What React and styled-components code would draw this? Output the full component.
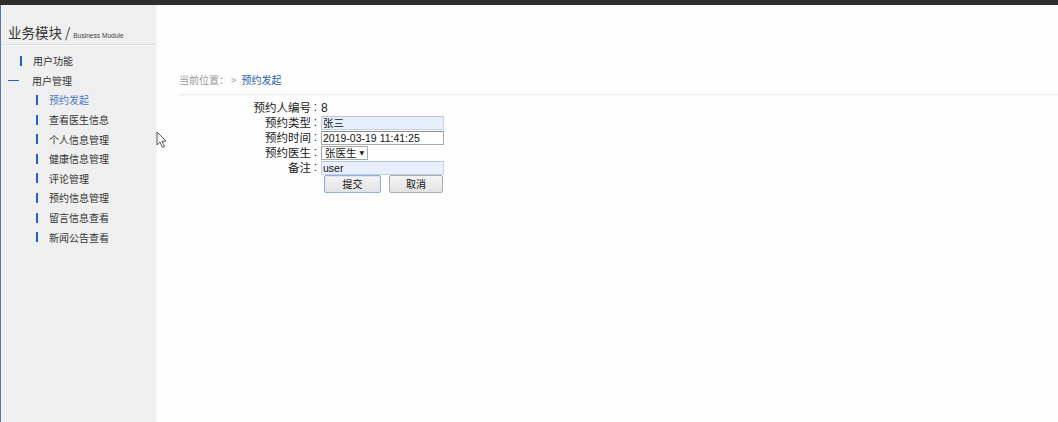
import React from "react";
import styled, { createGlobalStyle } from "styled-components";

const Global = createGlobalStyle`
  html, body { margin: 0; padding: 0; background: #fdfdfd; }
  body { font-family: "Liberation Sans", "Noto Sans CJK SC", sans-serif; color: #333; }
  * { box-sizing: border-box; }
`;

const Page = styled.div`
  position: relative;
  width: 1058px;
  height: 422px;
  display: flex;
  flex-direction: column;
  overflow: hidden;
`;

const TopBar = styled.div`
  height: 5px;
  background: #2e2e2c;
  flex: none;
`;

const Body = styled.div`
  flex: 1;
  display: flex;
`;

const Sidebar = styled.aside`
  width: 157px;
  flex: none;
  background: #efefef;
  border-left: 1px solid #5a76a0;
  border-right: 1px solid #f4f4f4;
`;

const SideTitle = styled.div`
  height: 40px;
  padding: 18px 0 0 7px;
  border-bottom: 1px solid #dcdcdc;
  box-shadow: 0 1px 0 #f7f7f7;
  font-family: "Noto Sans CJK SC", sans-serif;
  font-size: 13.5px;
  color: #333;
  white-space: nowrap;
  line-height: 18px;
`;

const SubTitle = styled.span`
  font-family: "Liberation Sans", sans-serif;
  font-size: 6.6px;
  color: #444;
`;

const Menu = styled.ul`
  list-style: none;
  margin: 0;
  padding: 6px 0 0 0;
`;

const Item = styled.li`
  height: 19.6px;
  display: flex;
  align-items: center;
  padding-left: ${(p) => (p.$level === 2 ? 35 : p.$dash ? 7 : 19)}px;
  font-family: "Noto Sans CJK SC", sans-serif;
  font-size: 10px;
  color: ${(p) => (p.$active ? "#4a78c8" : "#333")};
  white-space: nowrap;
`;

const Bar = styled.span`
  display: inline-block;
  width: 2px;
  height: 10px;
  background: #2160d0;
  margin-right: 11px;
`;

const Dash = styled.span`
  display: inline-block;
  width: 11px;
  height: 1px;
  background: #2160d0;
  margin-right: 13px;
`;

const Main = styled.main`
  flex: 1;
  background: #fdfdfd;
`;

const Crumb = styled.div`
  margin: 66px 0 0 22px;
  height: 24px;
  padding-top: 1px;
  border-bottom: 1px solid #eeeeee;
  box-shadow: 0 1px 0 #f6f6f6;
  font-family: "Noto Sans CJK SC", sans-serif;
  font-size: 10px;
  color: #9a9a9a;
  line-height: 16px;
`;

const CrumbSep = styled.span`
  margin: 0 5px 0 2px;
`;

const CrumbLink = styled.span`
  color: #2a5faa;
`;

const Form = styled.div`
  margin-top: 5px;
  display: grid;
  grid-template-columns: 163px 124px;
  grid-auto-rows: 15px;
  font-family: "Noto Sans CJK SC", sans-serif;
  font-size: 11.5px;
  color: #222;
`;

const Label = styled.div`
  display: flex;
  justify-content: flex-end;
  align-items: center;
  line-height: 15px;
  white-space: nowrap;
`;

const Colon = styled.span`
  display: inline-block;
  width: 9px;
  text-align: center;
  font-family: "Liberation Sans", sans-serif;
  font-size: 12px;
`;

const Value = styled.div`
  display: flex;
  align-items: center;
  font-family: "Liberation Sans", sans-serif;
  font-size: 12px;
  padding-left: 1px;
`;

const Input = styled.div`
  width: 123px;
  height: 14px;
  border: 1px solid ${(p) => (p.$filled ? "#c7cfe0" : "#a9a9a9")};
  border-top-color: ${(p) => (p.$filled ? "#b8c2d8" : "#8f8f8f")};
  background: ${(p) => (p.$filled ? "#e8effc" : "#ffffff")};
  font-family: "Liberation Sans", "Noto Sans CJK SC", sans-serif;
  font-size: 10.5px;
  line-height: 12px;
  padding-left: 1px;
  color: #111;
  white-space: nowrap;
  overflow: hidden;
`;

const Select = styled.div`
  width: 47px;
  height: 14px;
  border: 1px solid #a9a9a9;
  background: #fff;
  display: flex;
  align-items: center;
  justify-content: space-between;
  padding: 0 3px 0 3px;
  font-family: "Noto Sans CJK SC", sans-serif;
  font-size: 10.5px;
  color: #111;
  white-space: nowrap;
`;

const Arrow = styled.span`
  font-size: 6px;
  color: #111;
  font-family: "DejaVu Sans", sans-serif;
`;

const Buttons = styled.div`
  grid-column: 2;
  display: flex;
  gap: 8px;
  padding-left: 4px;
  height: 18px;
`;

const Button = styled.button`
  height: 18px;
  width: ${(p) => p.$w}px;
  padding: 0;
  border: 1px solid ${(p) => (p.$primary ? "#8fb2d8" : "#adadad")};
  box-shadow: ${(p) => (p.$primary ? "inset 0 0 0 1px #d8e6f4" : "none")};
  border-radius: 2px;
  background: linear-gradient(#f4f4f4, #e2e2e2);
  font-family: "Noto Sans CJK SC", sans-serif;
  font-size: 10px;
  color: #111;
  line-height: 16px;
`;

const Cursor = styled.svg`
  position: absolute;
  left: 156px;
  top: 131px;
`;

const subItems = [
  "预约发起",
  "查看医生信息",
  "个人信息管理",
  "健康信息管理",
  "评论管理",
  "预约信息管理",
  "留言信息查看",
  "新闻公告查看",
];

export default function App() {
  return (
    <Page>
      <Global />
      <TopBar />
      <Body>
        <Sidebar>
          <SideTitle>
            业务模块 / <SubTitle>Business Module</SubTitle>
          </SideTitle>
          <Menu>
            <Item>
              <Bar />
              用户功能
            </Item>
            <Item $dash>
              <Dash />
              用户管理
            </Item>
            {subItems.map((t, i) => (
              <Item key={t} $level={2} $active={i === 0}>
                <Bar />
                {t}
              </Item>
            ))}
          </Menu>
        </Sidebar>
        <Main>
          <Crumb>
            当前位置：<CrumbSep>&gt;</CrumbSep>
            <CrumbLink>预约发起</CrumbLink>
          </Crumb>
          <Form>
            <Label>
              预约人编号<Colon>:</Colon>
            </Label>
            <Value>8</Value>
            <Label>
              预约类型<Colon>:</Colon>
            </Label>
            <Value>
              <Input $filled>张三</Input>
            </Value>
            <Label>
              预约时间<Colon>:</Colon>
            </Label>
            <Value>
              <Input>2019-03-19 11:41:25</Input>
            </Value>
            <Label>
              预约医生<Colon>:</Colon>
            </Label>
            <Value>
              <Select>
                张医生<Arrow>▼</Arrow>
              </Select>
            </Value>
            <Label>
              备注<Colon>:</Colon>
            </Label>
            <Value>
              <Input $filled>user</Input>
            </Value>
            <Buttons>
              <Button $primary $w={57}>提交</Button>
              <Button $w={54}>取消</Button>
            </Buttons>
          </Form>
        </Main>
      </Body>
      <Cursor width="12" height="18" viewBox="0 0 12 18">
        <path
          d="M1 1 L1 14 L4 11 L6.5 16.5 L8.5 15.5 L6 10.2 L10 10.2 Z"
          fill="#fff"
          stroke="#555"
          strokeWidth="1"
          strokeLinejoin="round"
        />
      </Cursor>
    </Page>
  );
}
